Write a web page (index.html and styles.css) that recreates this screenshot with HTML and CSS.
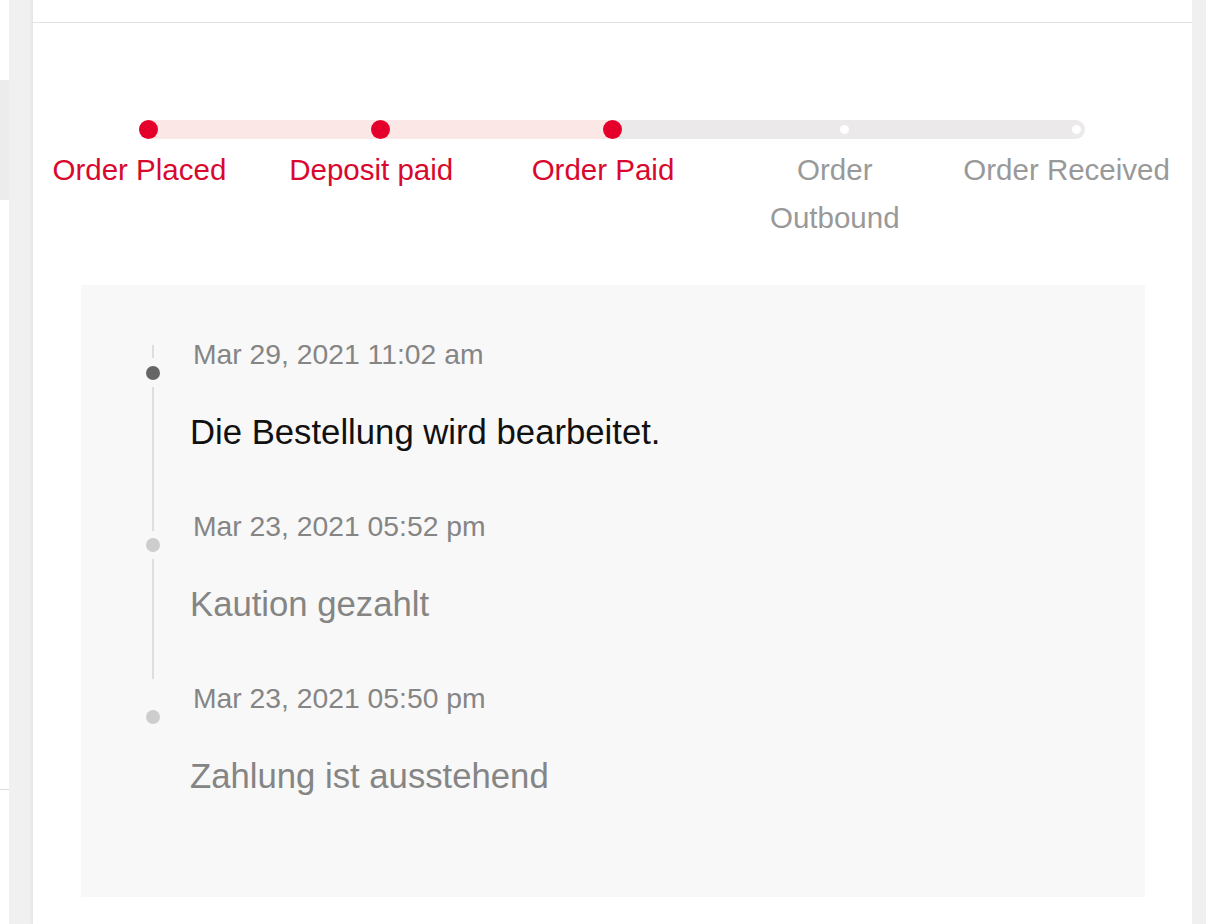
FILE: index.html
```html
<!DOCTYPE html>
<html lang="de">
<head>
  <meta charset="UTF-8" />
  <meta name="viewport" content="width=device-width, initial-scale=1.0"/>
  <title>Bestellstatus</title>
  <link rel="stylesheet" href="styles.css">
</head>
<body>
  <div class="page">
    <aside class="side">
      <div class="side-tab"></div>
      <div class="side-rule"></div>
    </aside>

    <main class="card">
      <div class="card-head"></div>

      <ol class="stepper">
        <li class="step done">
          <span class="dot-wrap"><span class="dot"></span></span>
          <span class="step-label">Order Placed</span>
        </li>
        <li class="step done">
          <span class="dot-wrap"><span class="dot"></span></span>
          <span class="step-label">Deposit paid</span>
        </li>
        <li class="step done">
          <span class="dot-wrap"><span class="dot"></span></span>
          <span class="step-label">Order Paid</span>
        </li>
        <li class="step">
          <span class="dot-wrap"><span class="dot"></span></span>
          <span class="step-label">Order Outbound</span>
        </li>
        <li class="step">
          <span class="dot-wrap"><span class="dot"></span></span>
          <span class="step-label">Order Received</span>
        </li>
      </ol>

      <section class="history">
        <div class="tl-item current">
          <div class="tl-mark">
            <span class="tl-stub first"></span>
            <span class="tl-dot"></span>
            <span class="tl-line"></span>
          </div>
          <div class="tl-body">
            <div class="tl-date">Mar 29, 2021 11:02 am</div>
            <div class="tl-text">Die Bestellung wird bearbeitet.</div>
          </div>
        </div>

        <div class="tl-item">
          <div class="tl-mark">
            <span class="tl-stub"></span>
            <span class="tl-dot"></span>
            <span class="tl-line"></span>
          </div>
          <div class="tl-body">
            <div class="tl-date">Mar 23, 2021 05:52 pm</div>
            <div class="tl-text">Kaution gezahlt</div>
          </div>
        </div>

        <div class="tl-item">
          <div class="tl-mark">
            <span class="tl-stub hidden"></span>
            <span class="tl-dot"></span>
          </div>
          <div class="tl-body">
            <div class="tl-date">Mar 23, 2021 05:50 pm</div>
            <div class="tl-text">Zahlung ist ausstehend</div>
          </div>
        </div>
      </section>
    </main>
  </div>
</body>
</html>
```

FILE: styles.css
```css
body {
  margin: 0;
  background: #f0f0f0;
  font-family: "Liberation Sans", Arial, sans-serif;
}
.page {
  display: flex;
  min-height: 924px;
  padding-right: 14px;
}

/* cut-off left panel */
.side {
  width: 9px;
  background: #fff;
  display: flex;
  flex-direction: column;
}
.side-tab {
  margin-top: 80px;
  height: 120px;
  background: #ececec;
}
.side-rule {
  margin-top: 589px;
  height: 1px;
  background: #dcdcdc;
}

.card {
  flex: 1;
  margin-left: 24px;
  background: #fff;
  box-shadow: -2px 0 3px rgba(0, 0, 0, 0.05);
}
.card-head {
  height: 22px;
  border-bottom: 1px solid #e3e3e3;
}

/* progress steps */
.stepper {
  position: relative;
  list-style: none;
  margin: 97px 0 0;
  padding: 0;
  display: grid;
  grid-template-columns: repeat(5, 1fr);
}
.stepper::before {
  content: "";
  position: absolute;
  top: 0;
  left: 106px;
  right: 107px;
  height: 19px;
  border-radius: 10px;
  background: linear-gradient(to right, #fbe8e6 0 473px, #ebe9e9 473px);
}
.step {
  display: flex;
  flex-direction: column;
  align-items: center;
}
.dot-wrap {
  position: relative;
  height: 19px;
  display: flex;
  align-items: center;
}
.dot {
  width: 9px;
  height: 9px;
  border-radius: 50%;
  background: #fff;
}
.step.done .dot {
  width: 19px;
  height: 19px;
  background: #e4002b;
}
.step-label {
  margin: 7px 19px 0 0;
  max-width: 210px;
  font-size: 29.5px;
  line-height: 48px;
  text-align: center;
  color: #999;
}
.step.done .step-label {
  color: #d8082e;
}

/* history timeline */
.history {
  margin: 43px 47px 0 48px;
  height: 562px;
  padding: 50px 0 0 65px;
  background: #f8f8f8;
}
.tl-item {
  display: grid;
  grid-template-columns: 14px 1fr;
  column-gap: 33px;
}
.tl-mark {
  display: flex;
  flex-direction: column;
  align-items: center;
}
.tl-stub {
  width: 2px;
  height: 24px;
  margin-bottom: 7px;
  background: #dedede;
}
.tl-stub.first {
  height: 13px;
  margin: 10px 0 8px;
}
.tl-stub.hidden {
  visibility: hidden;
}
.tl-dot {
  width: 14px;
  height: 14px;
  border-radius: 50%;
  background: #cdcdcd;
}
.tl-item.current .tl-dot {
  background: #666;
}
.tl-line {
  flex: 1;
  width: 2px;
  margin-top: 7px;
  background: #dedede;
}
.tl-body {
  padding-bottom: 51px;
}
.tl-date {
  font-size: 28.3px;
  line-height: 38px;
  color: #858585;
}
.tl-text {
  margin: 35px 0 0 -3px;
  font-size: 34.7px;
  line-height: 48px;
  color: #858585;
}
.tl-item.current .tl-text {
  color: #111;
}
```
